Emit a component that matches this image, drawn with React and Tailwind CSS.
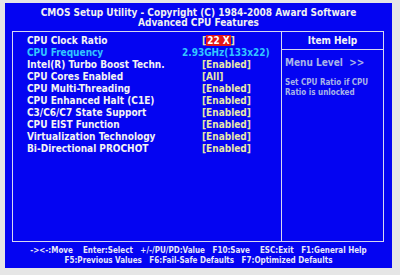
import React from 'react';

const rows = [
  { label: 'CPU Clock Ratio', value: 'ratio' },
  { label: 'CPU Frequency', value: '2.93GHz(133x22)', info: true },
  { label: 'Intel(R) Turbo Boost Techn.', value: '[Enabled]' },
  { label: 'CPU Cores Enabled', value: '[All]' },
  { label: 'CPU Multi-Threading', value: '[Enabled]' },
  { label: 'CPU Enhanced Halt (C1E)', value: '[Enabled]' },
  { label: 'C3/C6/C7 State Support', value: '[Enabled]' },
  { label: 'CPU EIST Function', value: '[Enabled]' },
  { label: 'Virtualization Technology', value: '[Enabled]' },
  { label: 'Bi-Directional PROCHOT', value: '[Enabled]' },
];

const App = () => {
  return (
    <div
      className="w-[400px] h-[275px] bg-[#e6e6e6] pt-[3px] pl-[5px] overflow-hidden"
      style={{ fontFamily: '"DejaVu Sans Condensed", "DejaVu Sans", Verdana, sans-serif' }}
    >
      <div className="w-[387px] h-[265px] bg-[#0404f2] flex flex-col font-bold text-white">
        {/* Title */}
        <div className="pt-[5px] text-center text-[10px] leading-[10px] text-[#f0f0f0]">
          <div>CMOS Setup Utility - Copyright (C) 1984-2008 Award Software</div>
          <div>Advanced CPU Features</div>
        </div>

        {/* Main box */}
        <div className="ml-[7px] mt-[3px] w-[372px] h-[211px] border border-[#d8d8f0] flex">
          {/* Settings list */}
          <div className="w-[269px] border-r border-[#d8d8f0] pt-[3px] pl-[14px] text-[10px] leading-[12px]">
            {rows.map((row, i) => (
              <div key={i} className="flex">
                <div className={`w-[175px] whitespace-nowrap ${row.info ? 'text-[#33c6ff]' : 'text-[#f4f4f4]'}`}>
                  {row.label}
                </div>
                {row.value === 'ratio' ? (
                  <div className="text-[#e8e8a8] whitespace-nowrap">
                    [<span className="bg-[#e41818] text-white px-[1px]">22 X</span>]
                  </div>
                ) : row.info ? (
                  <div className="ml-[-20px] text-[#33c6ff] whitespace-nowrap">{row.value}</div>
                ) : (
                  <div className="text-[#e8e8a8] whitespace-nowrap">{row.value}</div>
                )}
              </div>
            ))}
          </div>

          {/* Item help */}
          <div className="flex-1 flex flex-col">
            <div className="h-[18px] border-b border-[#d8d8f0] text-center text-[10px] leading-[17px] text-[#f4f4f4]">
              Item Help
            </div>
            <div className="pl-[3px] pt-[7px] text-[10px] leading-[12px] text-[#a8b4e8] whitespace-nowrap">
              Menu Level&nbsp;&nbsp;&gt;&gt;
            </div>
            <div className="pl-[3px] mt-[9px] text-[8px] leading-[9.5px] text-[#a8b4e8]">
              <div>Set CPU Ratio if CPU</div>
              <div>Ratio is unlocked</div>
            </div>
          </div>
        </div>

        {/* Footer */}
        <div className="pt-[4px] text-center text-[8px] leading-[9.5px] text-[#e8e8f8] whitespace-nowrap">
          <div>-&gt;&lt;-:Move&nbsp;&nbsp;&nbsp; Enter:Select&nbsp;&nbsp; +/-/PU/PD:Value&nbsp;&nbsp; F10:Save&nbsp;&nbsp;&nbsp; ESC:Exit&nbsp;&nbsp; F1:General Help</div>
          <div>F5:Previous Values&nbsp;&nbsp; F6:Fail-Safe Defaults&nbsp;&nbsp; F7:Optimized Defaults</div>
        </div>
      </div>
    </div>
  );
};

export default App;
